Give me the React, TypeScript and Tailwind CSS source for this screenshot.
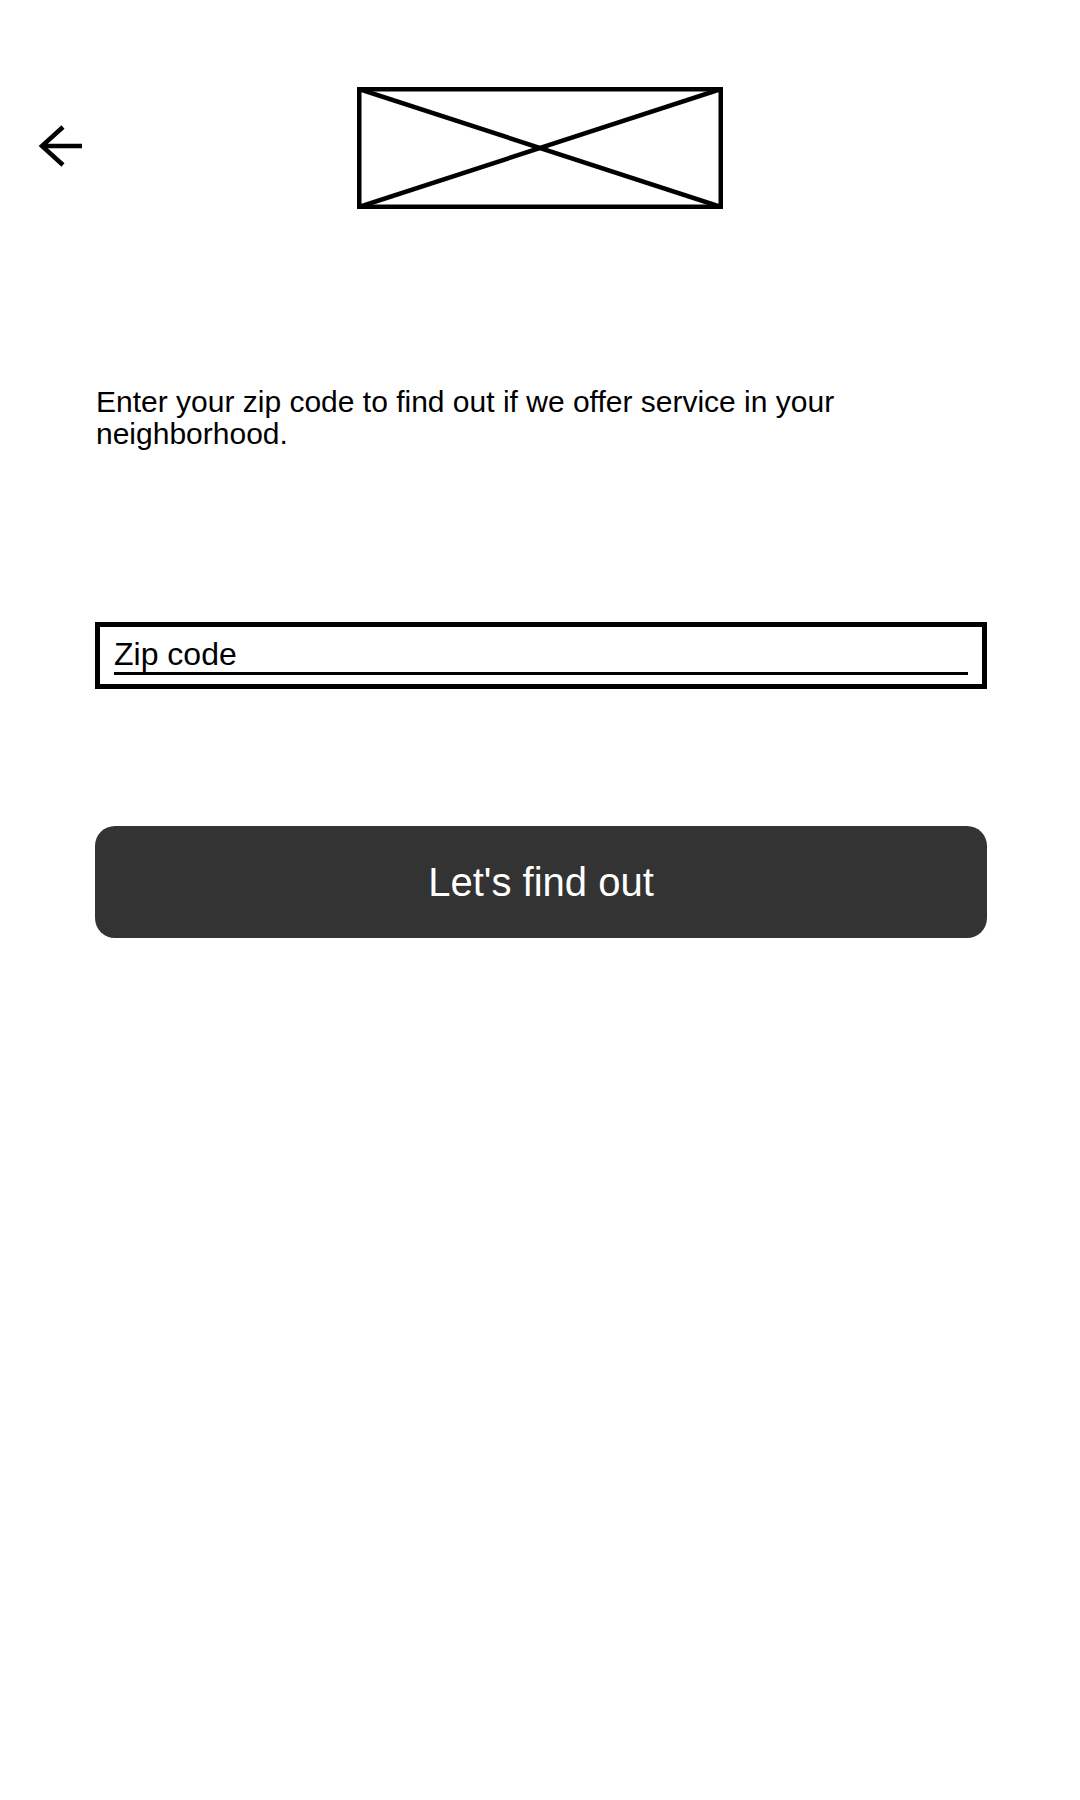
import React from 'react';

function BackArrow() {
  return (
    <svg width="48" height="48" viewBox="0 0 48 48" fill="none" stroke="#000" strokeWidth="4.5">
      <path d="M4 24 H44" />
      <path d="M25 5 L4 24 L25 43" strokeLinejoin="miter" />
    </svg>
  );
}

function LogoPlaceholder() {
  return (
    <svg width="366" height="122" viewBox="0 0 366 122" fill="none" stroke="#000" strokeWidth="4.5">
      <rect x="2.25" y="2.25" width="361.5" height="117.5" />
      <path d="M2 2 L364 120" />
      <path d="M364 2 L2 120" />
    </svg>
  );
}

function App() {
  return (
    <div
      className="min-h-screen w-full bg-white text-black"
      style={{ fontFamily: '"Liberation Sans", Arial, sans-serif' }}
    >
      <header className="grid grid-cols-[1fr_auto_1fr] items-center pt-[87px]">
        <button className="justify-self-start pl-[38px] mb-[4px]" aria-label="Back">
          <BackArrow />
        </button>
        <LogoPlaceholder />
        <div />
      </header>

      <main className="pl-[95px] pr-[93px]">
        <p className="mt-[177px] text-[30px] leading-[32px] pl-[1px]">
          Enter your zip code to find out if we offer service in your neighborhood.
        </p>

        <div className="mt-[172px] h-[67px] border-[5px] border-black px-[14px] pt-[11px]">
          <div className="border-b-[3px] border-black pb-[2px] text-[32px] leading-[32px]">
            Zip code
          </div>
        </div>

        <button className="mt-[137px] flex h-[112px] w-full items-center justify-center rounded-[20px] bg-[#333333] text-[40px] text-white">
          Let's find out
        </button>
      </main>
    </div>
  );
}

export default App;
